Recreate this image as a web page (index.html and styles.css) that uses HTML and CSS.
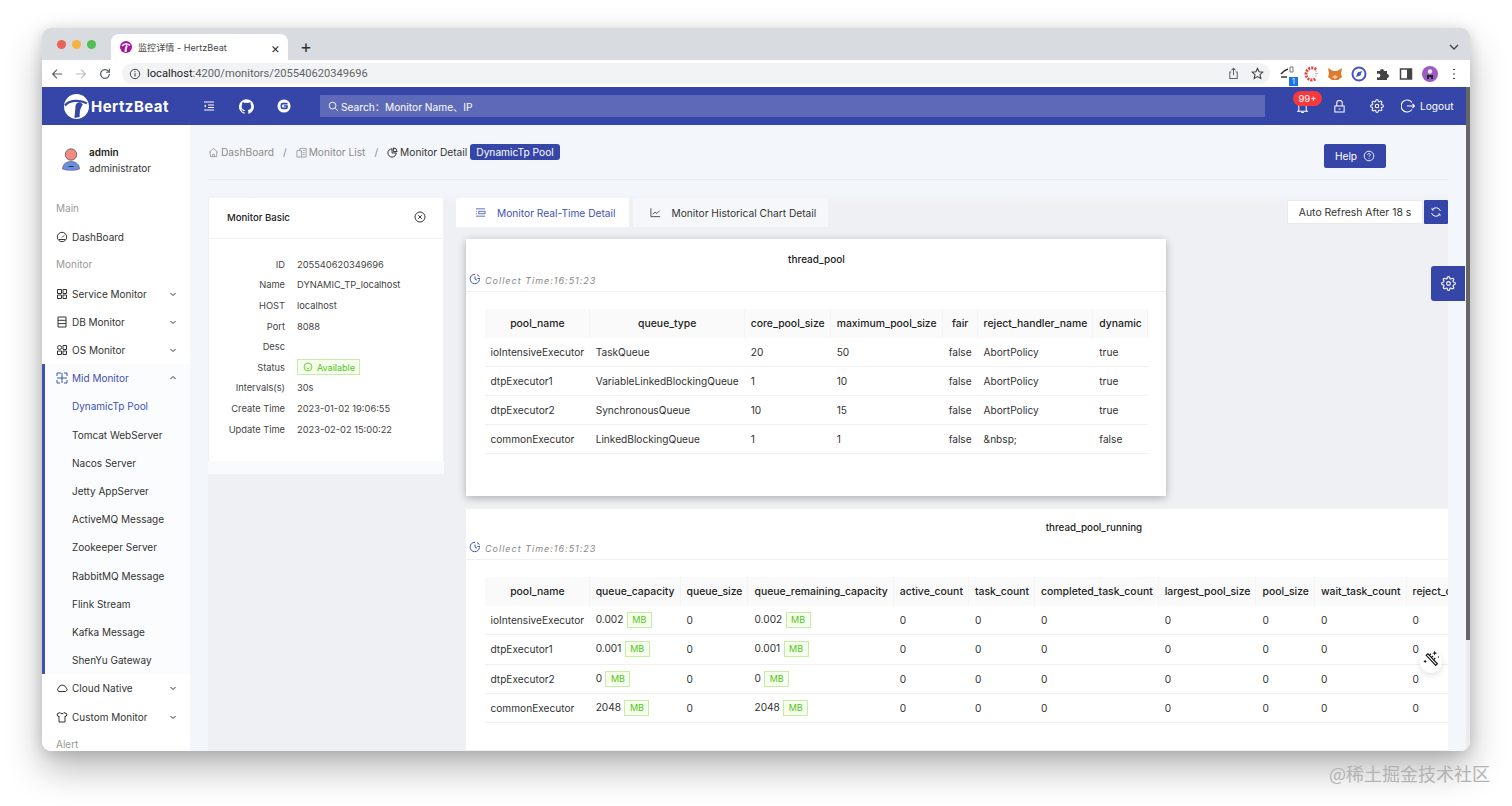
FILE: index.html
```html
<!DOCTYPE html>
<html lang="en">
<head>
<meta charset="utf-8">
<title>监控详情 - HertzBeat</title>
<link rel="stylesheet" href="styles.css">
</head>
<body>
<div class="window">
  <div class="tabstrip">
    <div class="lights"><i class="l-red"></i><i class="l-yellow"></i><i class="l-green"></i></div>
    <div class="tab">
      <svg class="favicon" viewBox="0 0 24 24"><circle cx="12" cy="12" r="12" fill="#a8129c"/><path d="M4 10c4-5 12-5 16-1" fill="none" stroke="#fff" stroke-width="3"/><path d="M14 9c-2 3-3 7-3 13" fill="none" stroke="#fff" stroke-width="4"/></svg>
      <span class="tab-title">监控详情 - HertzBeat</span>
      <span class="tab-close">×</span>
    </div>
    <span class="tab-new">+</span>
    <svg class="tab-menu" viewBox="0 0 12 12"><path d="M2 4l4 4 4-4" fill="none" stroke="#444" stroke-width="1.4"/></svg>
  </div>
  <div class="toolbar">
    <svg class="tb-ico" viewBox="0 0 16 16"><path d="M14 8H3M8 3L3 8l5 5" fill="none" stroke="#5f6368" stroke-width="1.4"/></svg>
    <svg class="tb-ico" viewBox="0 0 16 16"><path d="M2 8h11M8 3l5 5-5 5" fill="none" stroke="#bcc0c4" stroke-width="1.4"/></svg>
    <svg class="tb-ico" viewBox="0 0 16 16"><path d="M13 8a5 5 0 1 1-1.500-3.500L13 6M13 2v4H9" fill="none" stroke="#5f6368" stroke-width="1.4"/></svg>
    <div class="omnibox">
      <svg class="omni-info" viewBox="0 0 12 12"><circle cx="6" cy="6" r="4.700" fill="none" stroke="#444" stroke-width="1"/><path d="M6 5.300v3.200M6 3.200v1" stroke="#444" stroke-width="1.100"/></svg>
      <span class="url"><b>localhost</b>:4200/monitors/205540620349696</span>
      <svg class="omni-share" viewBox="0 0 14 14"><path d="M4.500 5.500H3v7h8v-7H9.500M7 9V1.500M4.800 3.500L7 1.300l2.200 2.200" fill="none" stroke="#5f6368" stroke-width="1.100"/></svg>
      <svg class="omni-star" viewBox="0 0 14 14"><path d="M7 1.500l1.700 3.700 4 .4-3 2.700.9 4L7 10.300l-3.600 2 .9-4-3-2.700 4-.4z" fill="none" stroke="#444" stroke-width="1.200"/></svg>
    </div>
    <div class="ext-row">
      <span class="ext ext-translate"><svg viewBox="0 0 16 16"><path d="M1 8c2-3 4-4 7-5" fill="none" stroke="#333" stroke-width="1.500"/><path d="M10 1h3v5h-3z" fill="none" stroke="#777"/><path d="M1 11h6" stroke="#666" stroke-width="2"/></svg><em>1</em></span>
      <svg class="ext" viewBox="0 0 16 16"><path d="M12 3.500A6 6 0 1 0 12 12.500" fill="none" stroke="#e0474c" stroke-width="3" stroke-dasharray="2 1"/><path d="M11 7.500h3M11 5h2M11 10h2" stroke="#e8a0a0" stroke-width="1"/></svg>
      <svg class="ext" viewBox="0 0 16 16"><path d="M1 2l5 3h4l5-3-1 6 1 3-4 3H5l-4-3 1-3z" fill="#dd7a2c"/><path d="M5 11l3-2 3 2-3 2z" fill="#f5c9a0"/></svg>
      <svg class="ext" viewBox="0 0 16 16"><circle cx="8" cy="8" r="6.500" fill="none" stroke="#4a55c4" stroke-width="2"/><path d="M5 11l1.500-4.500L11 5l-1.500 4.500z" fill="#4a55c4"/></svg>
      <svg class="ext" viewBox="0 0 16 16"><path d="M2 5h3a2 2 0 1 1 4 0h3v3a2 2 0 1 1 0 4v2H2v-3a2 2 0 1 0 0-3z" fill="#444"/></svg>
      <svg class="ext" viewBox="0 0 16 16"><rect x="2.500" y="3" width="11" height="10" fill="none" stroke="#444" stroke-width="1.500"/><rect x="9" y="3" width="4.500" height="10" fill="#444"/></svg>
      <svg class="ext" viewBox="0 0 16 16"><circle cx="8" cy="8" r="8" fill="#9a5cc4"/><circle cx="8" cy="5.500" r="2.200" fill="#eee"/><path d="M5 13V9h6v4h-2v-2H7v2z" fill="#222"/></svg>
      <svg class="ext" viewBox="0 0 16 16"><path d="M8 3v1M8 7.500v1M8 12v1" stroke="#444" stroke-width="2"/></svg>
    </div>
  </div>
  <div class="viewport">
    <div class="app">
      <header class="header">
        <svg class="logo-mark" viewBox="0 0 24 24"><circle cx="12" cy="12" r="12" fill="#fff"/><path d="M1 11C5 6 15 5 22 9" fill="none" stroke="#3546a8" stroke-width="2.200"/><path d="M16 8c-4 0-5 2-5 5l-1 10 5-1c0-4 0-8 3-12z" fill="#3546a8"/></svg>
        <span class="logo-text">HertzBeat</span>
        <svg class="hd-ico hd-menu" viewBox="0 0 12 12"><path d="M1 2h10M5 5h6M5 7.500h6M1 10h10" stroke="#fff" stroke-width="1"/><path d="M3 4.500L1 6l2 1.500z" fill="#fff"/></svg>
        <svg class="hd-ico hd-git" viewBox="0 0 16 16"><path fill="#fff" d="M8 .2a8 8 0 0 0-2.500 15.600c.4.100.5-.2.500-.4v-1.400c-2.200.5-2.700-1-2.700-1-.4-.900-.9-1.200-.9-1.200-.7-.5.100-.5.100-.5.800.100 1.200.8 1.200.8.700 1.200 1.900.9 2.300.7.100-.5.300-.9.500-1.100-1.800-.2-3.700-.9-3.700-4 0-.9.300-1.600.8-2.100-.1-.2-.4-1 .1-2.100 0 0 .7-.2 2.200.8a7.600 7.600 0 0 1 4 0c1.500-1 2.200-.8 2.200-.8.500 1.100.2 1.900.1 2.100.5.500.8 1.200.8 2.100 0 3.100-1.900 3.800-3.700 4 .3.300.6.800.6 1.500v2.200c0 .2.100.5.500.4A8 8 0 0 0 8 .2z"/></svg>
        <svg class="hd-ico hd-g" viewBox="0 0 16 16"><circle cx="8" cy="8" r="7.500" fill="#fff"/><path d="M12 5.300H6.500A1.500 1.500 0 0 0 5 6.800v2.400a1.500 1.500 0 0 0 1.500 1.500h4a1 1 0 0 0 1-1V8H8" fill="none" stroke="#3546a8" stroke-width="1.800"/></svg>
        <div class="search">
          <svg class="search-ico" viewBox="0 0 12 12"><circle cx="5" cy="5" r="3.700" fill="none" stroke="#fff"/><path d="M8 8l3 3" stroke="#fff"/></svg>
          <span>Search：Monitor Name、IP</span>
        </div>
        <div class="hd-right">
          <div class="bell">
            <svg class="bell-ico" viewBox="0 0 14 14"><path d="M3 10V6a4 4 0 0 1 8 0v4l1 1H2zM5.500 12.500h3" fill="none" stroke="#fff" stroke-width="1.100"/></svg>
            <span class="badge">99+</span>
          </div>
          <svg class="hd-ico hd-lock" viewBox="0 0 14 14"><path d="M2 6.500h10v6.500H2zM4 6.500V3.500a3 3 0 0 1 6 0v3" fill="none" stroke="#fff" stroke-width="1.100"/><path d="M6 9.700h2" stroke="#fff" stroke-width="1.200"/></svg>
          <svg class="hd-ico hd-gear" viewBox="0 0 24 24"><circle cx="12" cy="12" r="3" fill="none" stroke="#fff" stroke-width="1.800"/><path fill="none" stroke="#fff" stroke-width="1.800" d="M19.400 15a1.650 1.650 0 0 0 .33 1.820l.06.06a2 2 0 0 1 0 2.830 2 2 0 0 1-2.830 0l-.06-.06a1.650 1.650 0 0 0-1.820-.33 1.650 1.650 0 0 0-1 1.510V21a2 2 0 0 1-2 2 2 2 0 0 1-2-2v-.09A1.650 1.650 0 0 0 9 19.400a1.650 1.650 0 0 0-1.820.33l-.06.06a2 2 0 0 1-2.830 0 2 2 0 0 1 0-2.830l.06-.06a1.650 1.650 0 0 0 .33-1.820 1.650 1.650 0 0 0-1.510-1H3a2 2 0 0 1-2-2 2 2 0 0 1 2-2h.09A1.650 1.650 0 0 0 4.600 9a1.650 1.650 0 0 0-.33-1.820l-.06-.06a2 2 0 0 1 0-2.830 2 2 0 0 1 2.830 0l.06.06a1.650 1.650 0 0 0 1.820.33H9a1.650 1.650 0 0 0 1-1.510V3a2 2 0 0 1 2-2 2 2 0 0 1 2 2v.09a1.650 1.650 0 0 0 1 1.510 1.650 1.650 0 0 0 1.820-.33l.06-.06a2 2 0 0 1 2.830 0 2 2 0 0 1 0 2.830l-.06.06a1.650 1.650 0 0 0-.33 1.820V9a1.650 1.650 0 0 0 1.510 1H21a2 2 0 0 1 2 2 2 2 0 0 1-2 2h-.09a1.650 1.650 0 0 0-1.510 1z"/></svg>
          <svg class="hd-ico hd-logout" viewBox="0 0 14 14"><path d="M11 3.500A6 6 0 1 0 11 10.500M6 7h7.500M11.500 5l2 2-2 2" fill="none" stroke="#fff" stroke-width="1.100"/></svg>
          <span class="logout">Logout</span>
        </div>
      </header>
      <div class="body">
        <aside class="sidebar">
          <div class="user">
            <svg class="avatar" viewBox="0 0 20 26"><circle cx="10" cy="7.500" r="5.700" fill="#f28b82" stroke="#555" stroke-width=".8"/><path d="M1.500 22c0-5 4-7.500 8.500-7.500s8.500 2.500 8.500 7.500c-3 1.700-14 1.700-17 0z" fill="#6d8ee0" stroke="#555" stroke-width=".6"/><path d="M7.500 19.500h5" stroke="#234" stroke-width="1"/></svg>
            <div class="user-text"><div class="user-name">admin</div><div class="user-role">administrator</div></div>
          </div>
          <div class="side-group">Main</div>
          <div class="side-item"><svg class="side-ico" viewBox="0 0 12 12"><circle cx="6" cy="6" r="4.700" fill="none" stroke="#333"/><path d="M6 6.500l2-2M3 8.500h6" stroke="#333"/></svg>DashBoard</div>
          <div class="side-group">Monitor</div>
          <div class="side-item"><svg class="side-ico" viewBox="0 0 12 12"><path d="M1.500 1.500h4v4h-4zM7 1.500h3.500v4H7zM1.500 7h4v3.500h-4zM7 7h3.500v3.500H7z" fill="none" stroke="#333"/></svg>Service Monitor<svg class="chev" viewBox="0 0 8 8"><path d="M1.500 3L4 5.500 6.500 3" fill="none" stroke="#333"/></svg></div>
          <div class="side-item"><svg class="side-ico" viewBox="0 0 12 12"><path d="M2 1h8v10H2zM2 4.300h8M2 7.600h8" fill="none" stroke="#333"/></svg>DB Monitor<svg class="chev" viewBox="0 0 8 8"><path d="M1.500 3L4 5.500 6.500 3" fill="none" stroke="#333"/></svg></div>
          <div class="side-item"><svg class="side-ico" viewBox="0 0 12 12"><circle cx="3.500" cy="3.500" r="2" fill="none" stroke="#333"/><path d="M7 1.500h3.500v4H7zM1.500 7h4v3.500h-4zM7 7h3.500v3.500H7z" fill="none" stroke="#333"/></svg>OS Monitor<svg class="chev" viewBox="0 0 8 8"><path d="M1.500 3L4 5.500 6.500 3" fill="none" stroke="#333"/></svg></div>
          <div class="side-open">
            <div class="side-item is-active"><svg class="side-ico" viewBox="0 0 12 12"><path d="M1 4V1h4M8 1h3v3M11 8v3H8M4 11H1V8M1 6h10M6 1v10" fill="none" stroke="#3f51b5"/></svg>Mid Monitor<svg class="chev" viewBox="0 0 8 8"><path d="M1.500 5L4 2.500 6.500 5" fill="none" stroke="#333"/></svg></div>
            <div class="side-sub is-active">DynamicTp Pool</div>
            <div class="side-sub">Tomcat WebServer</div>
            <div class="side-sub">Nacos Server</div>
            <div class="side-sub">Jetty AppServer</div>
            <div class="side-sub">ActiveMQ Message</div>
            <div class="side-sub">Zookeeper Server</div>
            <div class="side-sub">RabbitMQ Message</div>
            <div class="side-sub">Flink Stream</div>
            <div class="side-sub">Kafka Message</div>
            <div class="side-sub">ShenYu Gateway</div>
          </div>
          <div class="side-item"><svg class="side-ico" viewBox="0 0 12 12"><path d="M3 9.500h6.500a2 2 0 0 0 .5-3.700A4 4 0 0 0 6 3a4 4 0 0 0-3.500 3A2 2 0 0 0 3 9.500z" fill="none" stroke="#333"/></svg>Cloud Native<svg class="chev" viewBox="0 0 8 8"><path d="M1.500 3L4 5.500 6.500 3" fill="none" stroke="#333"/></svg></div>
          <div class="side-item"><svg class="side-ico" viewBox="0 0 12 12"><path d="M4 1.500L1 3l1 2.500 1-.4V11h6V5.100l1 .4L11 3 8 1.500C7.500 3 4.500 3 4 1.500z" fill="none" stroke="#333"/></svg>Custom Monitor<svg class="chev" viewBox="0 0 8 8"><path d="M1.500 3L4 5.500 6.500 3" fill="none" stroke="#333"/></svg></div>
          <div class="side-group">Alert</div>
        </aside>
        <main class="main">
          <div class="page-head">
            <div class="crumbs">
              <svg class="crumb-ico" viewBox="0 0 12 12"><path d="M1 6l5-4.500L11 6M2.500 5v5.500h7V5M5 10.500V8h2v2.500" fill="none" stroke="#888" stroke-width=".8"/></svg>
              <span class="crumb">DashBoard</span><span class="sep">/</span>
              <svg class="crumb-ico" viewBox="0 0 12 12"><path d="M1 4h5v7H1zM4 4V1.500h7V11H6M7.500 3.800h2M7.500 6h2M7.500 8.200h2" fill="none" stroke="#888" stroke-width=".8"/></svg>
              <span class="crumb">Monitor List</span><span class="sep">/</span>
              <svg class="crumb-ico" viewBox="0 0 12 12"><path d="M5.500 2a4.500 4.500 0 1 0 4.500 4.500H5.500z" fill="none" stroke="#222"/><path d="M7 1a4 4 0 0 1 4 4H7z" fill="none" stroke="#222"/></svg>
              <span class="crumb is-current">Monitor Detail</span>
              <span class="app-tag">DynamicTp Pool</span>
            </div>
            <button class="help">Help<svg class="help-ico" viewBox="0 0 12 12"><circle cx="6" cy="6" r="4.800" fill="none" stroke="#fff" stroke-width=".9"/><path d="M4.700 4.800a1.300 1.300 0 1 1 2 1.100c-.5.300-.7.500-.7 1M6 8v.8" fill="none" stroke="#fff" stroke-width=".9"/></svg></button>
          </div>
          <div class="content">
            <div class="left-col">
              <section class="basic">
                <div class="basic-head"><span>Monitor Basic</span><svg class="close-ico" viewBox="0 0 12 12"><circle cx="6" cy="6" r="5" fill="none" stroke="#222" stroke-width=".9"/><path d="M4.200 4.200l3.600 3.600M7.800 4.200L4.200 7.800" stroke="#222" stroke-width=".9"/></svg></div>
                <dl class="basic-list">
                  <dt>ID</dt><dd>205540620349696</dd>
                  <dt>Name</dt><dd>DYNAMIC_TP_localhost</dd>
                  <dt>HOST</dt><dd>localhost</dd>
                  <dt>Port</dt><dd>8088</dd>
                  <dt>Desc</dt><dd></dd>
                  <dt>Status</dt><dd><span class="status"><svg class="status-ico" viewBox="0 0 12 12"><circle cx="6" cy="6" r="4.700" fill="none" stroke="#52c41a"/><path d="M3.800 6.500c1 1.800 3.400 1.800 4.400 0" fill="none" stroke="#52c41a"/></svg>Available</span></dd>
                  <dt>Intervals(s)</dt><dd>30s</dd>
                  <dt>Create Time</dt><dd>2023-01-02 19:06:55</dd>
                  <dt>Update Time</dt><dd>2023-02-02 15:00:22</dd>
                </dl>
              </section>
              <div class="basic-foot"></div>
            </div>
            <div class="right-col">
              <div class="tabs-row">
                <div class="tab-btn is-active"><svg class="tab-ico" viewBox="0 0 12 12"><path d="M1 2h10M4 4.700h7v2.600H4zM1 10h10M1 4.700h1M1 7.300h1" fill="none" stroke="#3f51b5" stroke-width=".9"/></svg>Monitor Real-Time Detail</div>
                <div class="tab-btn"><svg class="tab-ico" viewBox="0 0 12 12"><path d="M1 1.500v9h10M3 8l2.500-2.500L7.500 7 10.500 4" fill="none" stroke="#333" stroke-width=".9"/></svg>Monitor Historical Chart Detail</div>
                <div class="refresh">
                  <span class="refresh-text">Auto Refresh After 18 s</span>
                  <span class="refresh-btn"><svg class="refresh-ico" viewBox="0 0 12 12"><path d="M10.500 5A4.700 4.700 0 0 0 2 4M1.500 7a4.700 4.700 0 0 0 8.500 1" fill="none" stroke="#fff"/><path d="M2 1.800V4h2.200M10 10.200V8H7.800" fill="none" stroke="#fff" stroke-width=".7"/></svg></span>
                </div>
              </div>
              <div class="cards">
                <section class="card card-raised">
                  <div class="card-title">thread_pool</div>
                  <div class="collect"><svg class="clock" viewBox="0 0 12 12"><path d="M10.500 6.500A4.700 4.700 0 1 1 6 1.300M6 3.500V6l2 1.300M8 1.500l2.500 2M11 5.500H8.500" fill="none" stroke="#3f51b5"/></svg><span>Collect Time:16:51:23</span></div>
                  <table class="grid">
                    <thead><tr><th>pool_name</th><th>queue_type</th><th>core_pool_size</th><th>maximum_pool_size</th><th>fair</th><th>reject_handler_name</th><th>dynamic</th></tr></thead>
                    <tbody>
                      <tr><td>ioIntensiveExecutor</td><td>TaskQueue</td><td>20</td><td>50</td><td>false</td><td>AbortPolicy</td><td>true</td></tr>
                      <tr><td>dtpExecutor1</td><td>VariableLinkedBlockingQueue</td><td>1</td><td>10</td><td>false</td><td>AbortPolicy</td><td>true</td></tr>
                      <tr><td>dtpExecutor2</td><td>SynchronousQueue</td><td>10</td><td>15</td><td>false</td><td>AbortPolicy</td><td>true</td></tr>
                      <tr><td>commonExecutor</td><td>LinkedBlockingQueue</td><td>1</td><td>1</td><td>false</td><td>&amp;nbsp;</td><td>false</td></tr>
                    </tbody>
                  </table>
                </section>
                <section class="card card-wide">
                  <div class="card-title">thread_pool_running</div>
                  <div class="collect"><svg class="clock" viewBox="0 0 12 12"><path d="M10.500 6.500A4.700 4.700 0 1 1 6 1.300M6 3.500V6l2 1.300M8 1.500l2.500 2M11 5.500H8.500" fill="none" stroke="#3f51b5"/></svg><span>Collect Time:16:51:23</span></div>
                  <table class="grid">
                    <thead><tr><th>pool_name</th><th>queue_capacity</th><th>queue_size</th><th>queue_remaining_capacity</th><th>active_count</th><th>task_count</th><th>completed_task_count</th><th>largest_pool_size</th><th>pool_size</th><th>wait_task_count</th><th>reject_count</th><th>run_timeout_count</th><th>queue_timeout_count</th></tr></thead>
                    <tbody>
                      <tr><td>ioIntensiveExecutor</td><td>0.002 <span class="unit">MB</span></td><td>0</td><td>0.002 <span class="unit">MB</span></td><td>0</td><td>0</td><td>0</td><td>0</td><td>0</td><td>0</td><td>0</td><td>0</td><td>0</td></tr>
                      <tr><td>dtpExecutor1</td><td>0.001 <span class="unit">MB</span></td><td>0</td><td>0.001 <span class="unit">MB</span></td><td>0</td><td>0</td><td>0</td><td>0</td><td>0</td><td>0</td><td>0</td><td>0</td><td>0</td></tr>
                      <tr><td>dtpExecutor2</td><td>0 <span class="unit">MB</span></td><td>0</td><td>0 <span class="unit">MB</span></td><td>0</td><td>0</td><td>0</td><td>0</td><td>0</td><td>0</td><td>0</td><td>0</td><td>0</td></tr>
                      <tr><td>commonExecutor</td><td>2048 <span class="unit">MB</span></td><td>0</td><td>2048 <span class="unit">MB</span></td><td>0</td><td>0</td><td>0</td><td>0</td><td>0</td><td>0</td><td>0</td><td>0</td><td>0</td></tr>
                    </tbody>
                  </table>
                </section>
              </div>
            </div>
          </div>
        </main>
      </div>
      <div class="float-gear"><svg viewBox="0 0 24 24"><circle cx="12" cy="12" r="3" fill="none" stroke="#fff" stroke-width="1.800"/><path fill="none" stroke="#fff" stroke-width="1.800" d="M19.400 15a1.650 1.650 0 0 0 .33 1.820l.06.06a2 2 0 0 1 0 2.830 2 2 0 0 1-2.830 0l-.06-.06a1.650 1.650 0 0 0-1.820-.33 1.650 1.650 0 0 0-1 1.510V21a2 2 0 0 1-2 2 2 2 0 0 1-2-2v-.09A1.650 1.650 0 0 0 9 19.400a1.650 1.650 0 0 0-1.820.33l-.06.06a2 2 0 0 1-2.830 0 2 2 0 0 1 0-2.830l.06-.06a1.650 1.650 0 0 0 .33-1.820 1.650 1.650 0 0 0-1.510-1H3a2 2 0 0 1-2-2 2 2 0 0 1 2-2h.09A1.650 1.650 0 0 0 4.600 9a1.650 1.650 0 0 0-.33-1.820l-.06-.06a2 2 0 0 1 0-2.830 2 2 0 0 1 2.830 0l.06.06a1.650 1.650 0 0 0 1.820.33H9a1.650 1.650 0 0 0 1-1.510V3a2 2 0 0 1 2-2 2 2 0 0 1 2 2v.09a1.650 1.650 0 0 0 1 1.510 1.650 1.650 0 0 0 1.820-.33l.06-.06a2 2 0 0 1 2.830 0 2 2 0 0 1 0 2.830l-.06.06a1.650 1.650 0 0 0-.33 1.820V9a1.650 1.650 0 0 0 1.510 1H21a2 2 0 0 1 2 2 2 2 0 0 1-2 2h-.09a1.650 1.650 0 0 0-1.510 1z"/></svg></div>
      <div class="float-wand"><svg viewBox="0 0 16 16"><path d="M4.500 3.500l9 9.500-1.500 1.500-9-9.500z" fill="#fff" stroke="#111" stroke-width="1.100"/><path d="M6 5l1.500-1.500M8 7l1.500-1.500M10 9l1.500-1.500" stroke="#111" stroke-width="1.100"/><path d="M11 .5l.6 1.900 1.900.6-1.900.6-.6 1.900-.6-1.900-1.900-.6 1.900-.6zM2 9l.5 1.200 1.200.5-1.200.5-.5 1.200-.5-1.200-1.200-.5 1.200-.5zM14.500 5.500l.3.800.8.300-.8.300-.3.800-.3-.8-.8-.3.800-.3z" fill="#111"/></svg></div>
    </div>
    <div class="scrollbar"><div class="scroll-thumb"></div></div>
  </div>
</div>
<div class="watermark">@稀土掘金技术社区</div>
</body>
</html>
```
FILE: styles.css
```css
* { box-sizing: border-box; }
html, body { margin: 0; height: 806px; overflow: hidden; background: #fff; }
body { padding: 28px 42px 0; font-family: Inter, "Noto Sans CJK SC", sans-serif; font-size: 10.2px; color: rgba(0,0,0,.85); }
svg { display: block; flex: none; }

.window { width: 1428px; height: 723px; border-radius: 9px; overflow: hidden; box-shadow: 0 18px 36px rgba(0,0,0,.28), 0 2px 14px rgba(0,0,0,.14); display: flex; flex-direction: column; background: #fff; }

.tabstrip { height: 32px; background: #d8dbdf; display: flex; align-items: flex-end; flex: none; position: relative; }
.lights { display: flex; gap: 6px; padding-left: 15px; align-self: flex-start; margin-top: 12px; width: 69px; }
.lights i { width: 9px; height: 9px; border-radius: 50%; }
.l-red { background: #ed5f57; } .l-yellow { background: #f3b33d; } .l-green { background: #4fc152; }
.tab { width: 177px; height: 26px; background: #fff; border-radius: 8px 8px 0 0; display: flex; align-items: center; padding: 0 8px 0 9px; }
.favicon { width: 12px; height: 12px; margin-right: 6px; }
.tab-title { flex: 1; font-size: 9.1px; color: #444; white-space: nowrap; }
.tab-close { font-size: 14px; color: #333; }
.tab-new { width: 36px; text-align: center; height: 26px; line-height: 25px; font-size: 18px; color: #333; }
.tab-menu { width: 12px; height: 12px; margin-left: auto; margin-right: 10px; margin-bottom: 7px; }

.toolbar { height: 27px; background: #fff; display: flex; align-items: center; padding-left: 8px; flex: none; }
.tb-ico { width: 14px; height: 14px; margin-right: 10px; }
.omnibox { width: 1148px; height: 21px; margin-left: 0; background: #f1f3f4; border-radius: 11px; display: flex; align-items: center; padding: 0 6px 0 7px; }
.omni-info { width: 12px; height: 12px; margin-right: 6px; }
.url { flex: 1; font-family: Roboto, sans-serif; font-size: 11.15px; color: #5f6368; margin-top: -1px; }
.url b { font-weight: 400; color: #222; }
.omni-share { width: 13px; height: 13px; margin-right: 11px; }
.omni-star { width: 13px; height: 13px; }
.ext-row { display: flex; align-items: center; gap: 7.700px; margin-left: 10px; }
.ext { width: 16px; height: 16px; position: relative; }
.ext em { position: absolute; right: -2px; bottom: -4px; width: 9px; height: 9px; background: #1a73e8; color: #fff; font-style: normal; font-size: 7px; line-height: 9px; text-align: center; }

.viewport { flex: 1; display: flex; min-height: 0; }
.app { width: 1424px; display: flex; flex-direction: column; position: relative; min-height: 0; }
.scrollbar { width: 4px; background: #ececec; }
.scroll-thumb { height: 553px; background: #666; }

.header { height: 38px; background: #3546a8; display: flex; align-items: center; padding-left: 22px; color: #fff; flex: none; }
.logo-mark { width: 25px; height: 25px; margin-right: 2px; }
.logo-text { font-size: 15px; font-weight: 700; letter-spacing: .45px; width: 112px; }
.hd-menu { width: 12px; height: 12px; }
.hd-git { width: 15px; height: 15px; margin-left: 24px; }
.hd-g { width: 14px; height: 14px; margin-left: 23px; }
.search { width: 945px; height: 22px; margin-left: 29px; background: #5e6ab8; border-radius: 1px; display: flex; align-items: center; padding-left: 8px; font-size: 10.2px; color: #fff; flex: none; }
.search-ico { width: 11px; height: 11px; margin-right: 2px; }
.hd-right { display: flex; align-items: center; margin-left: 28px; }
.bell { width: 29px; height: 38px; position: relative; }
.bell-ico { width: 13px; height: 13px; position: absolute; left: 3px; top: 14px; }
.badge { position: absolute; left: 0; top: 4px; width: 29px; height: 15px; background: #f5393d; border-radius: 8px; font-size: 9.5px; line-height: 15px; text-align: center; color: #fff; }
.hd-lock { width: 13px; height: 13px; margin-left: 11px; }
.hd-gear { width: 14px; height: 14px; margin-left: 24px; }
.hd-logout { width: 14px; height: 14px; margin-left: 17px; }
.logout { margin-left: 5px; font-size: 10.2px; }

.body { flex: 1; display: flex; min-height: 0; }
.sidebar { width: 148px; background: #fff; flex: none; overflow: hidden; font-size: 10px; }
.user { height: 70.1px; display: flex; padding: 19px 0 0 19px; }
.avatar { width: 20px; height: 26px; margin-right: 8px; margin-top: 3px; }
.user-text { line-height: 16px; }
.user-name { font-weight: 600; color: #222; }
.user-role { color: #333; }
.side-group { height: 28.2px; line-height: 27.2px; padding-left: 14px; color: #999; }
.side-item { height: 28.2px; display: flex; align-items: center; padding-left: 14px; color: #333; }
.side-ico { width: 12px; height: 12px; margin-right: 4px; }
.chev { width: 8px; height: 8px; margin-left: auto; margin-right: 13px; }
.side-item.is-active { color: #3f51b5; padding-left: 11px; }
.side-open { border-left: 3px solid #3f51b5; background: #fbfcfd; }
.side-sub { height: 28.2px; line-height: 28.2px; padding-left: 27px; color: #333; }
.side-sub.is-active { color: #3f51b5; }

.main { flex: 1; background: #f3f7fb; display: flex; flex-direction: column; min-width: 0; padding: 0 18px; }
.page-head { height: 55px; border-bottom: 1px solid #e9ecef; display: flex; justify-content: space-between; flex: none; }
.crumbs { display: flex; align-items: center; height: 14px; margin-top: 20px; }
.crumb-ico { width: 11px; height: 11px; margin-right: 2px; }
.crumb { color: #8c8c8c; }
.crumb.is-current { color: #333; }
.sep { color: #8c8c8c; margin: 0 9px; }
.app-tag { background: #3546a8; color: #fff; height: 16px; line-height: 16px; border-radius: 3px; padding: 0 6px; margin-left: 3px; }
.help { width: 62px; height: 24px; margin: 19px 62px 0 0; border: 0; border-radius: 2px; background: #3546a8; color: #fff; font: inherit; display: flex; align-items: center; justify-content: center; gap: 6px; }
.help-ico { width: 12px; height: 12px; }

.content { flex: 1; margin-top: 10px; background: linear-gradient(#f3f7fb, #eef0f4 14px); display: flex; min-height: 0; overflow: hidden; }
.left-col { width: 236px; padding-top: 8px; flex: none; }
.basic { margin: 0 1px; background: #fff; height: 263px; }
.basic-head { height: 41px; padding-bottom: 2px; border-bottom: 1px solid #f0f0f0; display: flex; justify-content: space-between; align-items: center; padding-left: 18px; padding-right: 18px; font-weight: 500; font-size: 9.6px; color: #222; }
.close-ico { width: 12px; height: 12px; margin-right: -1px; }
.basic-list { margin: 15px 0 0; display: grid; grid-template-columns: 76px 1fr; grid-auto-rows: 20.6px; column-gap: 12px; font-size: 9.3px; align-items: center; }
.basic-list dt { text-align: right; color: #444; }
.basic-list dd { margin: 0; color: #444; }
.status { display: inline-flex; align-items: center; height: 16px; padding: 0 4px 0 5px; background: #f6ffed; border: 1px solid #c6eda5; color: #52c41a; font-size: 9px; }
.status-ico { width: 10px; height: 10px; margin-right: 4px; }
.basic-foot { height: 13px; background: #f8fafc; }

.right-col { flex: 1; min-width: 0; margin-left: 12px; padding-top: 8px; overflow: hidden; }
.tabs-row { display: flex; height: 29px; }
.tab-btn { height: 29px; display: flex; align-items: center; white-space: nowrap; padding: 0 12px 0 17px; margin-right: 4px; background: #f5f7fa; border-radius: 2px 2px 0 0; color: #333; font-size: 10.2px; }
.tab-btn.is-active { background: #fff; color: #3f51b5; padding: 0 13px 0 19px; }
.tab-ico { width: 11px; height: 11px; margin-right: 11px; }
.refresh { margin-left: auto; display: flex; margin-top: 2px; height: 24px; }
.refresh-text { width: 136px; background: #fff; border: 1px solid #eaeaea; line-height: 23px; text-align: center; color: #333; font-size: 10.4px; }
.refresh-btn { width: 24px; margin-left: 1px; background: #3546a8; border-radius: 1px; display: flex; align-items: center; justify-content: center; }
.refresh-ico { width: 12px; height: 12px; }

.cards { padding: 12px 0 0 10px; display: flex; flex-direction: column; align-items: flex-start; gap: 13px; }
.card { width: max-content; background: #fff; padding: 0 18px 27px 19px; }
.card-raised { padding-top: 1px; padding-bottom: 41.5px; box-shadow: 0 2px 8px rgba(0,0,0,.28); position: relative; }
.card-title { height: 32px; padding-top: 13px; line-height: 12px; text-align: center; font-weight: 500; font-size: 10px; color: #222; }
.card-wide .card-title { height: 31px; padding-top: 13px; font-size: 9.8px; }
.collect { height: 20px; margin: 0 -18px 16.5px -19px; padding-left: 3px; border-bottom: 1px solid #f0f0f0; display: flex; align-items: flex-start; color: #888; font-style: italic; font-size: 9px; letter-spacing: 1px; }
.card-wide .collect { margin-bottom: 17px; }
.collect span { margin-left: 4px; margin-top: 3px; }
.clock { width: 12px; height: 12px; margin-top: 1px; }

.grid { border-collapse: collapse; white-space: nowrap; font-size: 10.15px; }
.grid th { height: 29px; padding: 0 6px; background: #fafafa; font-weight: 500; font-size: 10.42px; color: #222; text-align: center; box-shadow: inset -1px 0 0 #f4f4f4; }
.grid td { height: 29px; padding: 0 6px; border-bottom: 1px solid #f0f0f0; color: #333; }
.card-wide .grid td { height: 29.3px; }
.grid th:first-child, .grid td:first-child { padding: 0 5.5px; }
.unit { display: inline-block; height: 16px; line-height: 14px; padding: 0 4.5px; border: 1px solid #c6eda5; background: #f6ffed; color: #52c41a; font-size: 9px; margin-left: .5px; vertical-align: middle; }

.float-gear { position: absolute; right: 1px; top: 179px; width: 34px; height: 35px; background: #3546a8; border-radius: 3px 0 0 3px; display: flex; align-items: center; justify-content: center; }
.float-gear svg { width: 15px; height: 15px; }
.float-wand { position: absolute; left: 1378px; top: 564px; width: 22px; height: 22px; border-radius: 50%; background: #fff; box-shadow: 0 2px 6px rgba(0,0,0,.12); display: flex; align-items: center; justify-content: center; }
.float-wand svg { width: 17px; height: 17px; margin-top: -7px; }

.watermark { position: absolute; left: 1329px; top: 762px; font-family: "Noto Sans CJK SC", sans-serif; font-size: 18px; color: #b3b3b3; line-height: 22px; }
```
